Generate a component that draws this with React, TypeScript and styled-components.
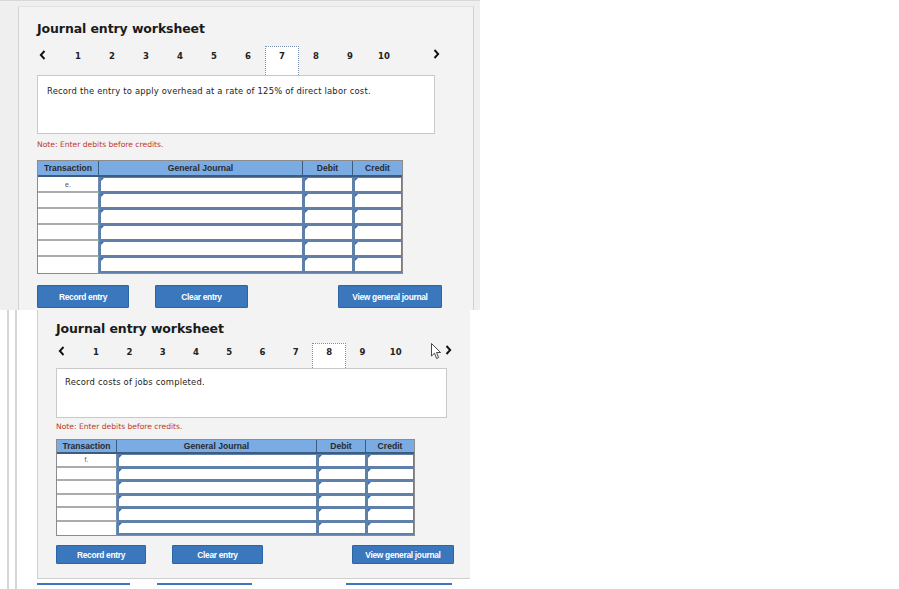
import React from "react";
import styled, { createGlobalStyle } from "styled-components";

const Global = createGlobalStyle`
  html, body { margin: 0; padding: 0; background: #ffffff; }
  body {
    width: 899px; height: 589px; overflow: hidden;
    font-family: "DejaVu Sans", Verdana, sans-serif;
  }
`;

type Dims = {
  padTop: number;
  titleGap: number;
  pagerH: number;
  numPad: number;
  prevW: number;
  cellW: number;
  boxW: number;
  boxH: number;
  textPadTop: number;
  textPadLeft: number;
  noteGap: number;
  tableGap: number;
  cols: number[];
  headH: number;
  rowH: number;
  btnGap: number;
  btnH: number;
  btnRowW: number;
  btnW: [number, number, number];
  cursorAt?: number;
};

const Page = styled.div`
  display: flex;
  flex-direction: column;
  width: 899px;
  height: 589px;
`;

const Shot1 = styled.div`
  width: 480px;
  height: 310px;
  box-sizing: border-box;
  background: #efefef;
  border-top: 1px solid #d8d8d8;
  padding: 5px 0 0 18px;
  display: flex;
`;

const Card1 = styled.div`
  width: 456px;
  box-sizing: border-box;
  background: #f3f3f3;
  border-left: 1px solid #d4d4d4;
  border-top: 1px solid #e2e2e2;
  border-right: 1px solid #d0d0d0;
  padding-left: 18px;
`;

const Shot2 = styled.div`
  display: flex;
  height: 279px;
`;

const Gutter = styled.div`
  width: 37px;
  flex: none;
  background: linear-gradient(
    to right,
    transparent 7px, #d6d6d6 7px, #d6d6d6 9px, transparent 9px,
    transparent 15px, #d6d6d6 15px, #d6d6d6 17px, transparent 17px
  );
`;

const Column = styled.div`
  display: flex;
  flex-direction: column;
`;

const Card2 = styled.div`
  width: 433px;
  height: 269px;
  box-sizing: border-box;
  background: #f3f3f3;
  border-left: 1px solid #cfcfcf;
  border-bottom: 1px solid #cfcfcf;
  padding-left: 18px;
`;

const Peek = styled.div`
  display: flex;
  padding-top: 4px;
`;

const PeekBar = styled.div<{ $w: number; $ml: number }>`
  width: ${(p) => p.$w}px;
  margin-left: ${(p) => p.$ml}px;
  height: 2px;
  background: #3b76bd;
`;

const Sheet = styled.div<{ $pad: number }>`
  padding-top: ${(p) => p.$pad}px;
  display: flex;
  flex-direction: column;
`;

const Title = styled.h2`
  margin: 0;
  font: bold 12.5px/16px "DejaVu Sans", Verdana, sans-serif;
  color: #1b1b1b;
  letter-spacing: -0.1px;
`;

const Pager = styled.div<{ $h: number; $gap: number; $w: number; $pad: number }>`
  position: relative;
  display: flex;
  align-items: flex-start;
  height: ${(p) => p.$h}px;
  margin-top: ${(p) => p.$gap}px;
  width: ${(p) => p.$w}px;
  --num-pad: ${(p) => p.$pad}px;
`;

const Arrow = styled.div<{ $w: number }>`
  width: ${(p) => p.$w}px;
  flex: none;
  display: flex;
  padding: calc(var(--num-pad) - 1px) 0 0 2px;
  box-sizing: border-box;
`;

const NextArrow = styled.div`
  margin-left: auto;
  display: flex;
  padding-top: calc(var(--num-pad) - 2px);
`;

const PageNum = styled.div<{ $w: number; $active?: boolean }>`
  width: ${(p) => p.$w}px;
  height: 100%;
  flex: none;
  box-sizing: border-box;
  padding-top: calc(var(--num-pad) - 1px);
  text-align: center;
  font: bold 8.5px/10px "DejaVu Sans", Verdana, sans-serif;
  color: #222;
  background: ${(p) => (p.$active ? "#ffffff" : "transparent")};
  border: ${(p) => (p.$active ? "1px dotted #7d8fb0" : "1px solid transparent")};
  border-bottom: none;
`;

const Cursor = styled.svg<{ $left: number }>`
  position: absolute;
  left: ${(p) => p.$left}px;
  top: 0px;
`;

const TextBox = styled.div<{ $w: number; $h: number; $pt: number; $pl: number }>`
  width: ${(p) => p.$w}px;
  height: ${(p) => p.$h}px;
  box-sizing: border-box;
  background: #ffffff;
  border: 1px solid #c9c9c9;
  padding: ${(p) => p.$pt}px 0 0 ${(p) => p.$pl}px;
  font: 8.4px/10px "DejaVu Sans", Verdana, sans-serif;
  letter-spacing: 0.2px;
  color: #222;
`;

const Note = styled.div<{ $gap: number }>`
  margin-top: ${(p) => p.$gap}px;
  font: 7.6px/10px "DejaVu Sans", Verdana, sans-serif;
  color: #c0392b;
`;

const Table = styled.div<{ $cols: string; $gap: number }>`
  margin-top: ${(p) => p.$gap}px;
  display: grid;
  grid-template-columns: ${(p) => p.$cols};
  width: max-content;
  border: 1px solid #8c8c8c;
  background: #ffffff;
`;

const HeadCell = styled.div<{ $h: number }>`
  height: ${(p) => p.$h}px;
  box-sizing: border-box;
  background: #7aabe3;
  border-right: 1px solid #3d5c80;
  border-bottom: 2px solid #3d5c80;
  display: flex;
  align-items: center;
  justify-content: center;
  font: bold 8.6px "Liberation Sans", Arial, sans-serif;
  color: #2a2a2a;
  &:nth-child(4) { border-right: none; }
`;

const TxCell = styled.div<{ $h: number; $last?: boolean }>`
  height: ${(p) => p.$h}px;
  box-sizing: border-box;
  background: #ffffff;
  border-bottom: ${(p) => (p.$last ? "none" : "2px solid #ababab")};
  border-right: 1px solid #6f8db2;
  display: flex;
  align-items: center;
  justify-content: center;
  font: 7px "Liberation Sans", Arial, sans-serif;
  color: #555;
`;

const InputCell = styled.div<{ $h: number }>`
  position: relative;
  height: ${(p) => p.$h}px;
  box-sizing: border-box;
  background: #ffffff;
  border-top: 1px solid #5f81a9;
  border-bottom: 2px solid #5f81a9;
  border-left: 2px solid #5f81a9;
  border-right: 1px solid #5f81a9;
  &::before {
    content: "";
    position: absolute;
    left: 0;
    top: 0;
    border-left: 3px solid #2b6fd6;
    border-bottom: 3px solid transparent;
  }
`;

const Buttons = styled.div<{ $gap: number; $w: number }>`
  margin-top: ${(p) => p.$gap}px;
  display: flex;
  width: ${(p) => p.$w}px;
`;

const Button = styled.button<{ $w: number; $h: number; $ml?: number; $auto?: boolean }>`
  width: ${(p) => p.$w}px;
  height: ${(p) => p.$h}px;
  margin-left: ${(p) => (p.$auto ? "auto" : `${p.$ml ?? 0}px`)};
  padding: 0;
  background: #3b77bd;
  border: 1px solid #2f64a4;
  border-radius: 1px;
  color: #ffffff;
  font: bold 8.4px "Liberation Sans", Arial, sans-serif;
  letter-spacing: -0.3px;
  cursor: pointer;
`;

const ChevronLeft = () => (
  <svg width="7" height="10" viewBox="0 0 7 10">
    <path d="M5.5 1 L1.8 5 L5.5 9" fill="none" stroke="#111" strokeWidth="1.9" />
  </svg>
);

const ChevronRight = () => (
  <svg width="7" height="10" viewBox="0 0 7 10">
    <path d="M1.5 1 L5.2 5 L1.5 9" fill="none" stroke="#111" strokeWidth="1.9" />
  </svg>
);

const Worksheet: React.FC<{ d: Dims; active: number; text: string; tx: string }> = ({
  d,
  active,
  text,
  tx,
}) => {
  const cols = d.cols.map((c) => `${c}px`).join(" ");
  const rows = [0, 1, 2, 3, 4, 5];
  return (
    <Sheet $pad={d.padTop}>
      <Title>Journal entry worksheet</Title>
      <Pager $h={d.pagerH} $gap={d.titleGap} $w={d.boxW + 5} $pad={d.numPad}>
        <Arrow $w={d.prevW}>
          <ChevronLeft />
        </Arrow>
        {Array.from({ length: 10 }, (_, i) => (
          <PageNum key={i} $w={d.cellW} $active={i + 1 === active}>
            {i + 1}
          </PageNum>
        ))}
        <NextArrow>
          <ChevronRight />
        </NextArrow>
        {d.cursorAt !== undefined && (
          <Cursor $left={d.cursorAt} width="11" height="17" viewBox="0 0 11 17">
            <path
              d="M0.5 0.5 L0.5 13 L3.5 10.2 L5.6 15.5 L7.6 14.6 L5.5 9.5 L9.6 9.5 Z"
              fill="#ffffff"
              stroke="#333"
              strokeWidth="0.9"
              strokeLinejoin="round"
            />
          </Cursor>
        )}
      </Pager>
      <TextBox $w={d.boxW} $h={d.boxH} $pt={d.textPadTop} $pl={d.textPadLeft}>
        {text}
      </TextBox>
      <Note $gap={d.noteGap}>Note: Enter debits before credits.</Note>
      <Table $cols={cols} $gap={d.tableGap}>
        <HeadCell $h={d.headH}>Transaction</HeadCell>
        <HeadCell $h={d.headH}>General Journal</HeadCell>
        <HeadCell $h={d.headH}>Debit</HeadCell>
        <HeadCell $h={d.headH}>Credit</HeadCell>
        {rows.map((r) => (
          <React.Fragment key={r}>
            <TxCell $h={d.rowH} $last={r === 5}>
              {r === 0 ? tx : ""}
            </TxCell>
            <InputCell $h={d.rowH} />
            <InputCell $h={d.rowH} />
            <InputCell $h={d.rowH} />
          </React.Fragment>
        ))}
      </Table>
      <Buttons $gap={d.btnGap} $w={d.btnRowW}>
        <Button $w={d.btnW[0]} $h={d.btnH}>
          Record entry
        </Button>
        <Button $w={d.btnW[1]} $h={d.btnH} $ml={26}>
          Clear entry
        </Button>
        <Button $w={d.btnW[2]} $h={d.btnH} $auto>
          View general journal
        </Button>
      </Buttons>
    </Sheet>
  );
};

const dims1: Dims = {
  padTop: 14,
  titleGap: 9,
  pagerH: 29,
  numPad: 5,
  prevW: 24,
  cellW: 34,
  boxW: 398,
  boxH: 59,
  textPadTop: 10,
  textPadLeft: 9,
  noteGap: 6,
  tableGap: 10,
  cols: [61, 204, 50, 49],
  headH: 16,
  rowH: 16,
  btnGap: 11,
  btnH: 23,
  btnRowW: 405,
  btnW: [92, 93, 104],
};

const dims2: Dims = {
  padTop: 11,
  titleGap: 6,
  pagerH: 25,
  numPad: 4,
  prevW: 23.4,
  cellW: 33.3,
  boxW: 391,
  boxH: 50,
  textPadTop: 8,
  textPadLeft: 8,
  noteGap: 4,
  tableGap: 7,
  cols: [60, 200, 49, 48],
  headH: 14,
  rowH: 13.5,
  btnGap: 9,
  btnH: 19,
  btnRowW: 398,
  btnW: [90, 91, 102],
  cursorAt: 375,
};

export default function App() {
  return (
    <Page>
      <Global />
      <Shot1>
        <Card1>
          <Worksheet
            d={dims1}
            active={7}
            tx="e."
            text="Record the entry to apply overhead at a rate of 125% of direct labor cost."
          />
        </Card1>
      </Shot1>
      <Shot2>
        <Gutter />
        <Column>
          <Card2>
            <Worksheet d={dims2} active={8} tx="f." text="Record costs of jobs completed." />
          </Card2>
          <Peek>
            <PeekBar $w={93} $ml={0} />
            <PeekBar $w={95} $ml={27} />
            <PeekBar $w={106} $ml={94} />
          </Peek>
        </Column>
      </Shot2>
    </Page>
  );
}
